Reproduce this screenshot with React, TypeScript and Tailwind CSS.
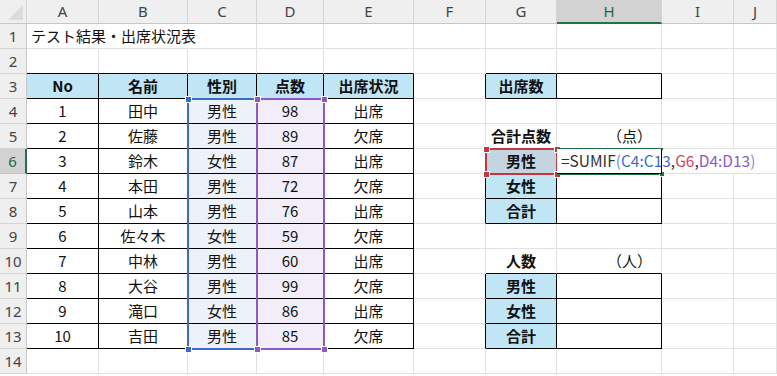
import React from "react";

const COLS = ["", "A", "B", "C", "D", "E", "F", "G", "H", "I", "J"];

const data: (string | number)[][] = [
  [1, "田中", "男性", 98, "出席"],
  [2, "佐藤", "男性", 89, "欠席"],
  [3, "鈴木", "女性", 87, "出席"],
  [4, "本田", "男性", 72, "欠席"],
  [5, "山本", "男性", 76, "出席"],
  [6, "佐々木", "女性", 59, "欠席"],
  [7, "中林", "男性", 60, "出席"],
  [8, "大谷", "男性", 99, "欠席"],
  [9, "滝口", "女性", 86, "出席"],
  [10, "吉田", "男性", 85, "欠席"],
];

type CellInfo = {
  text?: React.ReactNode;
  bold?: boolean;
  fill?: "head" | "blue" | "purple" | "sel" | "none";
  align?: "left" | "center" | "right";
  overflow?: boolean;
};

// which cells belong to a bordered table
const inTable = (r: number, c: number) => {
  if (r >= 3 && r <= 13 && c >= 1 && c <= 5) return true;
  if ((r === 3 || (r >= 6 && r <= 8) || (r >= 11 && r <= 13)) && (c === 7 || c === 8)) return true;
  return false;
};

const getCell = (r: number, c: number): CellInfo => {
  if (r === 1 && c === 1) return { text: "テスト結果・出席状況表", align: "left", overflow: true };
  if (r === 3 && c >= 1 && c <= 5)
    return { text: ["No", "名前", "性別", "点数", "出席状況"][c - 1], bold: true, fill: "head" };
  if (r >= 4 && r <= 13 && c >= 1 && c <= 5) {
    const v = data[r - 4][c - 1];
    return { text: v, fill: c === 3 ? "blue" : c === 4 ? "purple" : "none" };
  }
  if (r === 3 && c === 7) return { text: "出席数", bold: true, fill: "head" };
  if (r === 5 && c === 7) return { text: "合計点数", bold: true };
  if (r === 5 && c === 8) return { text: "（点）", align: "right" };
  if (r === 10 && c === 7) return { text: "人数", bold: true };
  if (r === 10 && c === 8) return { text: "（人）", align: "right" };
  if (c === 7 && ((r >= 6 && r <= 8) || (r >= 11 && r <= 13))) {
    const labels = ["男性", "女性", "合計"];
    const idx = r <= 8 ? r - 6 : r - 11;
    return { text: labels[idx], bold: true, fill: r === 6 ? "sel" : "head" };
  }
  if (r === 6 && c === 8)
    return {
      align: "left",
      overflow: true,
      text: (
        <span className="text-[#333] text-[15.5px]">
          =SUMIF<span className="text-[#6f8fc0]">(</span>
          <span className="text-[#3a6cc6]">C4:C13</span>,<span className="text-[#d8435a]">G6</span>,
          <span className="text-[#8b5ac6]">D4:D13</span>
          <span className="text-[#9a86c0]">)</span>
        </span>
      ),
    };
  return {};
};

const fillClass = {
  head: "bg-[#c0e6f5]",
  blue: "bg-[#edf1f9]",
  purple: "bg-[#f2eef9]",
  sel: "bg-[#c5d4e1]",
  none: "bg-white",
};

const Cell = ({ r, c }: { r: number; c: number }) => {
  const info = getCell(r, c);
  const blackR = inTable(r, c) || (c < 10 && inTable(r, c + 1));
  const blackB = inTable(r, c) || inTable(r + 1, c);
  const hideR = r === 6 && (c === 8 || c === 9);
  const hideR1 = r === 1 && c >= 1 && c <= 2;
  const align =
    info.align === "left" ? "justify-start pl-[4px]" : info.align === "right" ? "justify-end pr-[9px]" : "justify-center";
  return (
    <div
      className={`h-[25px] flex items-center border-r border-b ${align} ${fillClass[info.fill ?? "none"]} ${
        blackR ? "border-r-black" : hideR || hideR1 ? "border-r-transparent" : "border-r-[#e1e1e1]"
      } ${blackB ? "border-b-black" : "border-b-[#e1e1e1]"} ${info.bold ? "font-bold" : ""} ${
        info.overflow ? "overflow-visible whitespace-nowrap relative z-10" : ""
      }`}
    >
      {info.text !== undefined && <span>{info.text}</span>}
    </div>
  );
};

const Handle = ({ x, y, color }: { x: number; y: number; color: string }) => (
  <div
    className={`absolute w-[7px] h-[7px] border border-white ${color}`}
    style={{ left: x - 3, top: y - 3 }}
  />
);

export default function App() {
  const rows = Array.from({ length: 14 }, (_, i) => i + 1);
  return (
    <div className="relative w-[777px] h-[376px] overflow-hidden bg-white font-['Noto_Sans_CJK_JP',sans-serif] text-[15px] text-[#111]">
      <div className="grid grid-cols-[27px_72px_89px_69px_67px_90px_72px_71px_105px_72px_1fr]">
        {/* column headers */}
        {COLS.map((col, c) =>
          c === 0 ? (
            <div key={c} className="relative h-[24px] bg-[#efefef] border-r border-b border-r-[#d4d4d4] border-b-[#c6c6c6]">
              <div className="absolute right-[3px] bottom-[3px] w-0 h-0 [border-bottom:15px_solid_#dcdcdc] [border-left:15px_solid_transparent]" />
            </div>
          ) : c === 8 ? (
            <div
              key={c}
              className="h-[24px] flex items-center justify-center bg-[#d2d2d2] border-r border-r-[#d4d4d4] border-b-2 border-b-[#217346] text-[#1a6b40] text-[15px] font-['Noto_Sans',sans-serif]"
            >
              {col}
            </div>
          ) : (
            <div
              key={c}
              className="h-[24px] flex items-center justify-center bg-[#efefef] border-r border-b border-r-[#d4d4d4] border-b-[#c6c6c6] text-[#444] text-[15px] font-['Noto_Sans',sans-serif]"
            >
              {col}
            </div>
          )
        )}
        {rows.map((r) =>
          COLS.map((_, c) =>
            c === 0 ? (
              r === 6 ? (
                <div
                  key={`${r}-${c}`}
                  className="h-[25px] flex items-center justify-center bg-[#d2d2d2] border-r-2 border-b border-r-[#217346] border-b-[#c6c6c6] text-[#1a6b40] text-[15px] font-['Noto_Sans',sans-serif]"
                >
                  {r}
                </div>
              ) : (
                <div
                  key={`${r}-${c}`}
                  className="h-[25px] flex items-center justify-center bg-[#efefef] border-r border-b border-r-[#c6c6c6] border-b-[#d4d4d4] text-[#444] text-[15px] font-['Noto_Sans',sans-serif]"
                >
                  {r}
                </div>
              )
            ) : (
              <Cell key={`${r}-${c}`} r={r} c={c} />
            )
          )
        )}
      </div>

      {/* reference range: C4:C13 */}
      <div className="absolute left-[187px] top-[98px] w-[71px] h-[252px] border-2 border-[#3a6cc6]" />
      {/* reference range: D4:D13 */}
      <div className="absolute left-[256px] top-[98px] w-[69px] h-[252px] border-2 border-[#8b5ac6]" />
      <Handle x={188} y={99} color="bg-[#3a6cc6]" />
      <Handle x={188} y={349} color="bg-[#3a6cc6]" />
      <Handle x={257} y={99} color="bg-[#8b5ac6]" />
      <Handle x={324} y={99} color="bg-[#8b5ac6]" />
      <Handle x={257} y={349} color="bg-[#8b5ac6]" />
      <Handle x={324} y={349} color="bg-[#8b5ac6]" />

      {/* reference cell: G6 */}
      <div className="absolute left-[485px] top-[148px] w-[73px] h-[27px] border-2 border-[#c4373f]" />
      <Handle x={486} y={149} color="bg-[#c4373f]" />
      <Handle x={557} y={149} color="bg-[#c4373f]" />
      <Handle x={486} y={174} color="bg-[#c4373f]" />
      <Handle x={557} y={174} color="bg-[#c4373f]" />

      {/* active cell: H6 */}
      <div className="absolute left-[558px] top-[148px] w-[105px] h-[27px] border-t-2 border-b-2 border-l-2 border-[#217346]" />
      <div className="absolute left-[659px] top-[171px] w-[6px] h-[6px] bg-[#217346] border border-white" />
    </div>
  );
}
